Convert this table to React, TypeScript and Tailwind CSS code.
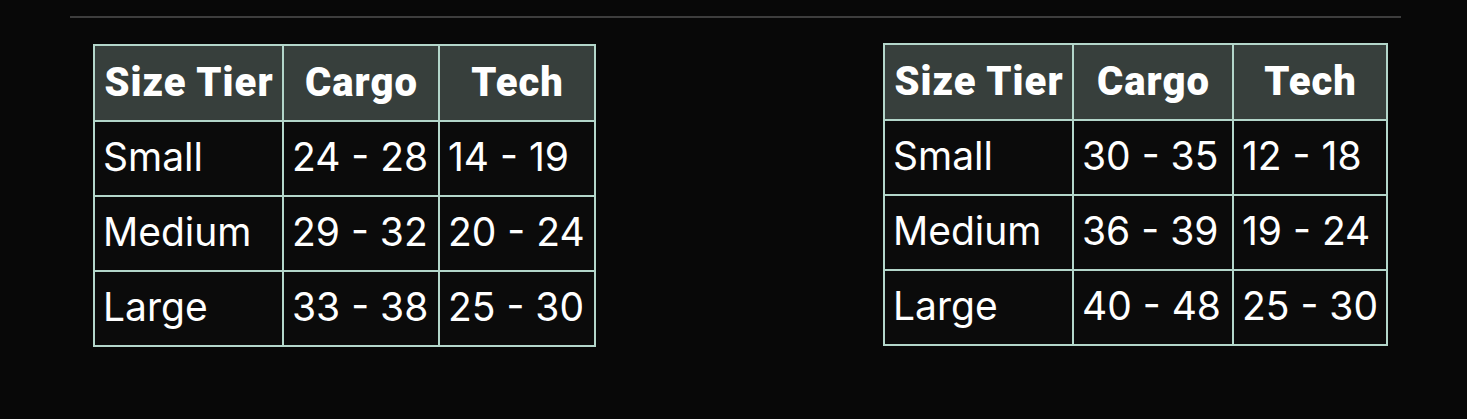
const leftRows = [
  ["Small", "24 - 28", "14 - 19"],
  ["Medium", "29 - 32", "20 - 24"],
  ["Large", "33 - 38", "25 - 30"],
];

const rightRows = [
  ["Small", "30 - 35", "12 - 18"],
  ["Medium", "36 - 39", "19 - 24"],
  ["Large", "40 - 48", "25 - 30"],
];

const SizeTable = ({ rows, cols }: { rows: string[][]; cols: number[] }) => {
  return (
    <table className="table-fixed border-collapse border-2 border-[#b3d6ca]">
      <colgroup>
        {cols.map((w, i) => (
          <col key={i} style={{ width: w }} />
        ))}
      </colgroup>
      <thead>
        <tr className="h-[76px] bg-[#373f3c]">
          {["Size Tier", "Cargo", "Tech"].map((h) => (
            <th
              key={h}
              className="border-2 border-[#b3d6ca] px-0 pl-[1px] text-center font-['Roboto',sans-serif] text-[40px] font-black tracking-[1px] text-white"
            >
              {h}
            </th>
          ))}
        </tr>
      </thead>
      <tbody>
        {rows.map((r) => (
          <tr key={r[0]} className="h-[75px] bg-[#0b0b0b]">
            {r.map((c, i) => (
              <td
                key={i}
                className="border-2 border-[#b3d6ca] px-[8px] pb-[3px] text-left font-['Inter',sans-serif] text-[39px] font-normal whitespace-nowrap text-white"
              >
                {c}
              </td>
            ))}
          </tr>
        ))}
      </tbody>
    </table>
  );
};

export default function App() {
  return (
    <div className="h-[419px] w-[1467px] bg-[#080808] pt-4">
      <div className="ml-[70px] h-[2px] w-[1331px] bg-[#3d3d3d]" />
      <div className="mt-[26px] flex items-start">
        <div className="ml-[93px]">
          <SizeTable rows={leftRows} cols={[189, 156, 156]} />
        </div>
        <div className="-mt-[1px] ml-[287px]">
          <SizeTable rows={rightRows} cols={[189, 160, 153]} />
        </div>
      </div>
    </div>
  );
}
